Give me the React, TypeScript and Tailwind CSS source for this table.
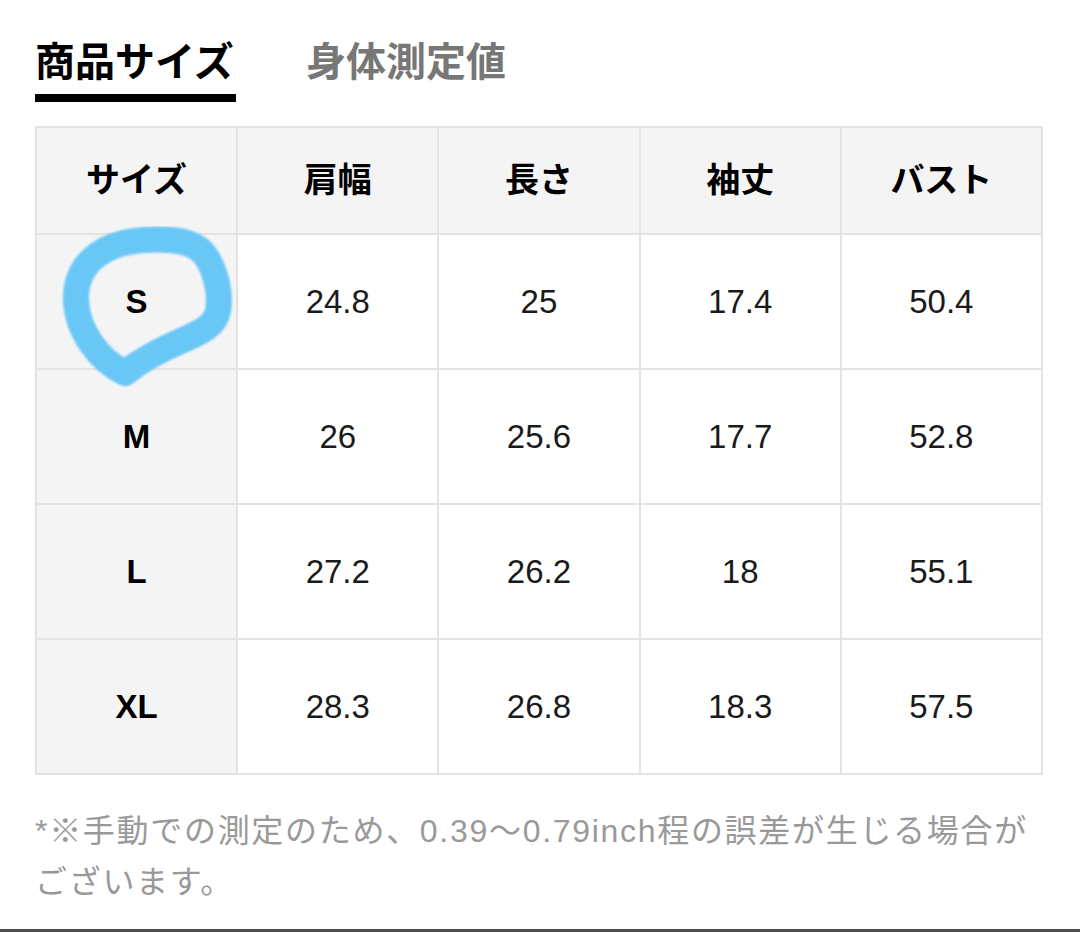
const headers = ['サイズ', '肩幅', '長さ', '袖丈', 'バスト']

const rows = [
  ['S', '24.8', '25', '17.4', '50.4'],
  ['M', '26', '25.6', '17.7', '52.8'],
  ['L', '27.2', '26.2', '18', '55.1'],
  ['XL', '28.3', '26.8', '18.3', '57.5'],
]

const font = "font-['Liberation_Sans','Noto_Sans_CJK_JP',sans-serif]"

export default function App() {
  return (
    <div className={`relative h-[932px] w-[1080px] overflow-hidden border-b-[3px] border-[#4d4d4d] bg-white ${font}`}>
      {/* Tabs */}
      <div className="flex gap-[70px] pl-[35px] pt-[42px]">
        <div className="flex flex-col">
          <span className="text-[40px] font-bold leading-none text-black">商品サイズ</span>
          <div className="mt-[12px] h-[8px] w-[201px] bg-black" />
        </div>
        <span className="text-[40px] font-bold leading-none text-[#777]">身体測定値</span>
      </div>

      {/* Size table */}
      <table className="ml-[35px] mt-[24px] w-[1008px] table-fixed border-collapse">
        <thead>
          <tr className="h-[107px] bg-[#f4f4f4]">
            {headers.map((h) => (
              <th key={h} className="border-2 border-[#e3e3e3] text-[34px] font-bold text-black">
                {h}
              </th>
            ))}
          </tr>
        </thead>
        <tbody>
          {rows.map((r) => (
            <tr key={r[0]} className="h-[135px]">
              {r.map((c, i) => (
                <td
                  key={i}
                  className={
                    i === 0
                      ? 'border-2 border-[#e3e3e3] bg-[#f4f4f4] text-center text-[33px] font-bold text-black'
                      : 'border-2 border-[#e3e3e3] text-center text-[33px] text-[#1a1a1a]'
                  }
                >
                  {c}
                </td>
              ))}
            </tr>
          ))}
        </tbody>
      </table>

      {/* Note */}
      <p className="mt-[31px] pl-[35px] text-[32px] leading-[51px] tracking-[1.7px] text-[#999]">
        <span className="block whitespace-nowrap">*※手動での測定のため、0.39〜0.79inch程の誤差が生じる場合が</span>
        <span className="block">ございます。</span>
      </p>

      {/* hand-drawn highlight around S */}
      <svg className="pointer-events-none absolute left-0 top-0" width="1080" height="932" viewBox="0 0 1080 932">
        <filter id="soft">
          <feGaussianBlur stdDeviation="0.8" />
        </filter>
        <path
          d="M125 373 C98 360 77 330 76 300 C75 266 100 243 144 240 C174 238 197 241 207 258 C216 273 221 293 218 311 C215 326 201 332 181 341 C160 350 140 361 125 373 Z"
          fill="none"
          stroke="#69c7f6"
          strokeWidth="26"
          strokeLinejoin="round"
          filter="url(#soft)"
        />
      </svg>
    </div>
  )
}
